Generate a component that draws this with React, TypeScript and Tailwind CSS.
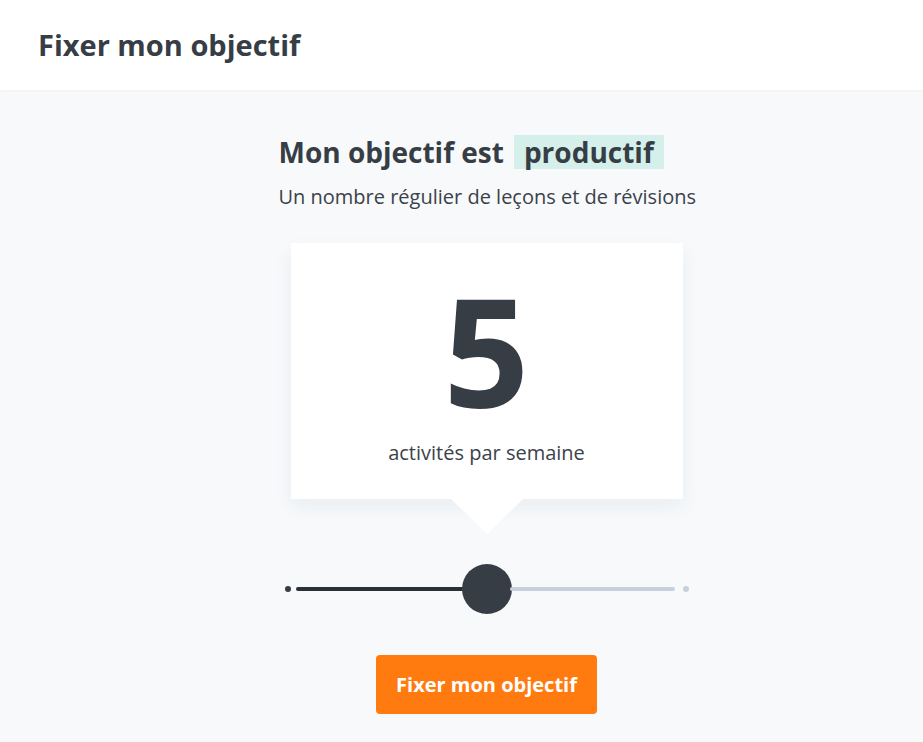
import React from 'react';

const App = () => {
  const value = 5;

  return (
    <div className="min-h-[742px] w-full bg-[#f7f9fb] text-[#363d45]" style={{ fontFamily: '"Open Sans", "Noto Sans", sans-serif' }}>
      {/* Top bar */}
      <div className="h-[90px] bg-white flex items-center pl-[38px] shadow-[0_1px_3px_rgba(0,0,0,0.04)]">
        <h1 className="text-[29px] font-bold">Fixer mon objectif</h1>
      </div>

      <div className="flex flex-col items-center pt-[44px] pl-[50px]">
        <div className="w-[416px]">
          <h2 className="text-[28px] font-bold leading-[36px] flex items-center">
            Mon objectif est
            <span className="ml-[10px] bg-[#d5efeb] px-[10px] leading-[34px]">productif</span>
          </h2>
          <p className="mt-[14px] text-[20px] leading-[26px] text-[#3b4249] whitespace-nowrap">
            Un nombre régulier de leçons et de révisions
          </p>
        </div>

        {/* Card with pointer */}
        <div className="relative mt-[33px] w-[392px] h-[256px] bg-white shadow-[0_8px_18px_rgba(40,60,90,0.06)] flex flex-col items-center">
          <div className="mt-[47px] text-[150px] font-bold leading-[120px] text-[#363d45]">{value}</div>
          <div className="mt-[30px] text-[20px] leading-[26px] text-[#3b4249]">activités par semaine</div>
          <div className="absolute left-1/2 -translate-x-1/2 top-full w-0 h-0 border-l-[36px] border-r-[36px] border-t-[35px] border-l-transparent border-r-transparent border-t-white" />
        </div>

        {/* Slider */}
        <div className="mt-[65px] w-[404px] h-[50px] flex items-center">
          <div className="w-[6px] h-[6px] rounded-full bg-[#363d45] shrink-0" />
          <div className="ml-[5px] w-[168px] h-[4px] bg-[#2b3036] rounded-full shrink-0" />
          <div className="w-[50px] h-[50px] rounded-full bg-[#363d45] shrink-0 -mx-[2px]" />
          <div className="w-[165px] h-[4px] bg-[#c6d1dd] rounded-full shrink-0" />
          <div className="ml-[8px] w-[6px] h-[6px] rounded-full bg-[#c6d1dd] shrink-0" />
        </div>

        <button className="mt-[41px] w-[221px] h-[59px] rounded-[4px] bg-[#ff7b10] text-white text-[20px] font-bold">
          Fixer mon objectif
        </button>
      </div>
    </div>
  );
};

export default App;
